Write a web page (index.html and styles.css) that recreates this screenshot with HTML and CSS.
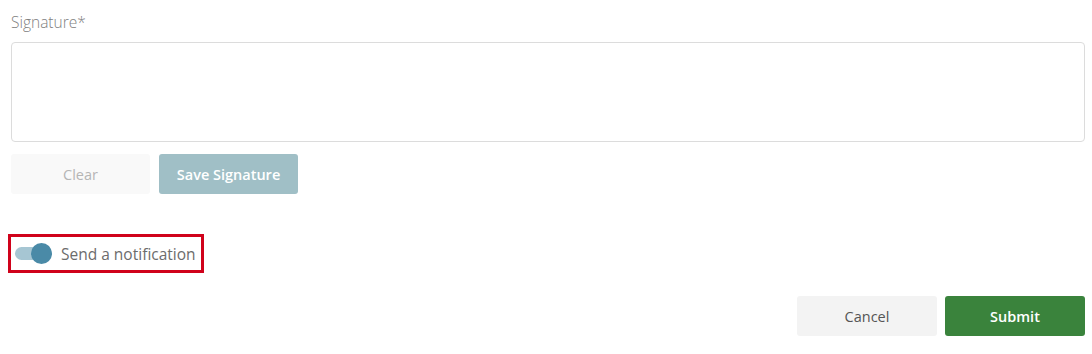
FILE: index.html
```html
<!DOCTYPE html>
<html>
<head>
<meta charset="utf-8">
<link rel="stylesheet" href="styles.css">
</head>
<body>
<div class="form">
  <div class="label">Signature*</div>
  <div class="sig-box"></div>
  <div class="sig-actions">
    <button class="btn btn-clear">Clear</button>
    <button class="btn btn-save">Save Signature</button>
  </div>
  <div class="notify">
    <span class="toggle"><span class="knob"></span></span>
    <span class="notify-text">Send a notification</span>
  </div>
  <div class="footer">
    <button class="btn btn-cancel">Cancel</button>
    <button class="btn btn-submit">Submit</button>
  </div>
</div>
</body>
</html>
```
FILE: styles.css
```css
html, body { margin: 0; padding: 0; background: #fff; }
body { font-family: "Open Sans", "Noto Sans", sans-serif; }
.form { padding: 12px 7px 0 11px; display: flex; flex-direction: column; }
.label { font-size: 15.5px; color: #808080; line-height: 20px; height: 20px; font-weight: 300; }
.sig-box { margin-top: 10px; height: 98px; border: 1px solid #dcdcdc; border-radius: 4px; }
.sig-actions { display: flex; gap: 9px; margin-top: 12px; }
.btn { font-family: inherit; border: none; border-radius: 3px; width: 140px; height: 40px; font-size: 14.5px; padding: 0; }
.btn-clear { background: #f9f9f9; color: #b5b5b5; width: 139px; }
.btn-save { background: #a0bfc6; color: #fff; font-weight: 600; width: 139px; }
.notify { align-self: flex-start; margin-top: 40px; margin-left: -3px; border: 3px solid #d0021b; display: flex; align-items: center; gap: 9px; padding: 0 5px 0 4px; height: 33px; }
.toggle { position: relative; width: 37px; height: 13px; background: #a6c6d3; border-radius: 7px; }
.knob { position: absolute; right: 0; top: -4px; width: 21px; height: 21px; border-radius: 50%; background: #4a8aa7; }
.notify-text { font-size: 15.5px; color: #6c6c6c; }
.footer { display: flex; justify-content: flex-end; gap: 8px; margin-top: 23px; }
.btn-cancel { background: #f3f3f3; color: #555; }
.btn-submit { background: #3a833c; color: #fff; font-weight: 600; }
```
